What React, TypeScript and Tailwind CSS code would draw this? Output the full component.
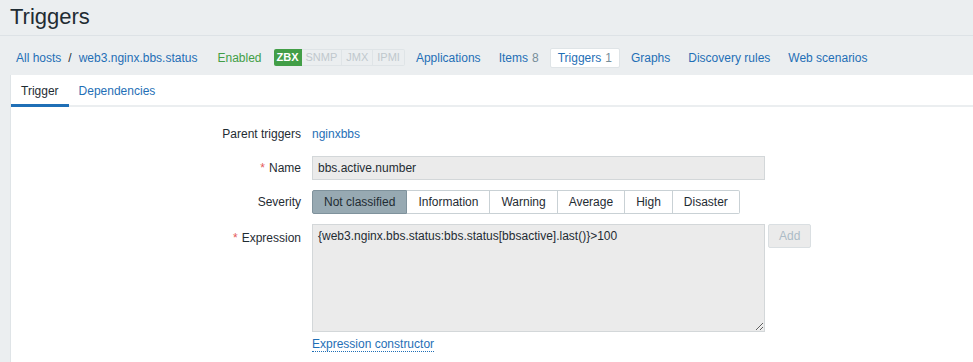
import { FC } from "react";

const link = "text-[#1f6fb6]";

const NavItem: FC<{ label: string; count?: string; active?: boolean }> = ({
  label,
  count,
  active,
}) => (
  <div
    className={`flex h-[20px] items-center rounded-[2px] px-[7px] ${
      active ? "border border-[#dfe4e7] bg-white" : ""
    }`}
  >
    <span className={link}>{label}</span>
    {count && <span className="ml-[4px] text-[#768d99]">{count}</span>}
  </div>
);

const severities = [
  "Not classified",
  "Information",
  "Warning",
  "Average",
  "High",
  "Disaster",
];

const Row: FC<{
  label: string;
  required?: boolean;
  top?: boolean;
  children: React.ReactNode;
}> = ({ label, required, top, children }) => (
  <div className={`mb-[10px] flex ${top ? "items-start" : "items-center"}`}>
    <div
      className={`w-[290px] shrink-0 text-right ${top ? "pt-[5px]" : ""}`}
    >
      {required && <span className="mr-[4px] text-[#e45959]">*</span>}
      {label}
    </div>
    <div className="ml-[11px] flex">{children}</div>
  </div>
);

export default function App() {
  return (
    <div className="h-[362px] w-[973px] overflow-hidden bg-[#ebeef0] font-['Liberation_Sans',Arial,sans-serif] text-[12px] text-[#1f2c33]">
      <div className="flex h-[36px] items-center border-b border-[#dde2e6] px-[10px]">
        <h1 className="pb-[2px] text-[22px] leading-none text-[#1f2c33]">
          Triggers
        </h1>
      </div>

      <div className="flex h-[39px] items-center pl-[16px] pt-[4px]">
        <span className={link}>All hosts</span>
        <span className="mx-[7px] text-[#1f2c33]">/</span>
        <span className={link}>web3.nginx.bbs.status</span>
        <span className="ml-[20px] text-[#429e47]">Enabled</span>
        <div className="ml-[12px] flex h-[17px] text-[11px] leading-none">
          <span className="flex items-center rounded-l-[2px] bg-[#429e47] px-[3px] font-bold text-white">
            ZBX
          </span>
          <span className="flex items-center border-y border-r border-[#dfe4e7] px-[4px] text-[#c0c8cd]">
            SNMP
          </span>
          <span className="flex items-center border-y border-r border-[#dfe4e7] px-[4px] text-[#c0c8cd]">
            JMX
          </span>
          <span className="flex items-center rounded-r-[2px] border-y border-r border-[#dfe4e7] px-[4px] text-[#c0c8cd]">
            IPMI
          </span>
        </div>
        <div className="ml-[4px] flex items-center gap-[4px]">
          <NavItem label="Applications" />
          <NavItem label="Items" count="8" />
          <NavItem label="Triggers" count="1" active />
          <NavItem label="Graphs" />
          <NavItem label="Discovery rules" />
          <NavItem label="Web scenarios" />
        </div>
      </div>

      <div className="ml-[10px] h-[300px] border-l border-[#dfe4e7] bg-white">
        <div className="flex h-[32px] border-b-2 border-[#ebeef0]">
          <div className="-mb-[2px] flex items-center border-b-[3px] border-[#1f6fb6] px-[10px] pt-[2px]">
            Trigger
          </div>
          <div className={`flex items-center px-[10px] pt-[2px] ${link}`}>
            Dependencies
          </div>
        </div>

        <div className="pt-[15px]">
          <Row label="Parent triggers">
            <span className={`flex h-[24px] items-center ${link}`}>nginxbbs</span>
          </Row>
          <Row label="Name" required>
            <div className="flex h-[24px] w-[453px] items-center border border-[#d3d7d9] bg-[#ebebeb] px-[5px] text-[#1f2c33]">
              bbs.active.number
            </div>
          </Row>
          <Row label="Severity">
            <div className="flex h-[24px]">
              {severities.map((s, i) => (
                <div
                  key={s}
                  className={`flex items-center px-[11px] ${
                    i === 0
                      ? "rounded-l-[2px] border border-[#7f929c] bg-[#97a9b2] text-[#1f2c33]"
                      : "border-y border-r border-[#c9d1d5] bg-white"
                  } ${i === severities.length - 1 ? "rounded-r-[2px]" : ""}`}
                >
                  {s}
                </div>
              ))}
            </div>
          </Row>
          <Row label="Expression" required top>
            <div className="flex flex-col">
              <textarea
                readOnly
                value="{web3.nginx.bbs.status:bbs.status[bbsactive].last()}>100"
                className="h-[108px] w-[453px] resize border border-[#d3d7d9] bg-[#ebebeb] px-[5px] py-[4px] text-[12px] leading-[14px] text-[#1f2c33] outline-none"
              />
              <span
                className={`mt-[5px] self-start border-b border-dotted border-[#1f6fb6] leading-[14px] ${link}`}
              >
                Expression constructor
              </span>
            </div>
            <div className="ml-[3px] flex h-[24px] items-center rounded-[2px] border border-[#dadfe2] bg-[#ebebeb] px-[10px] text-[#acbbc6]">
              Add
            </div>
          </Row>
        </div>
      </div>
    </div>
  );
}
